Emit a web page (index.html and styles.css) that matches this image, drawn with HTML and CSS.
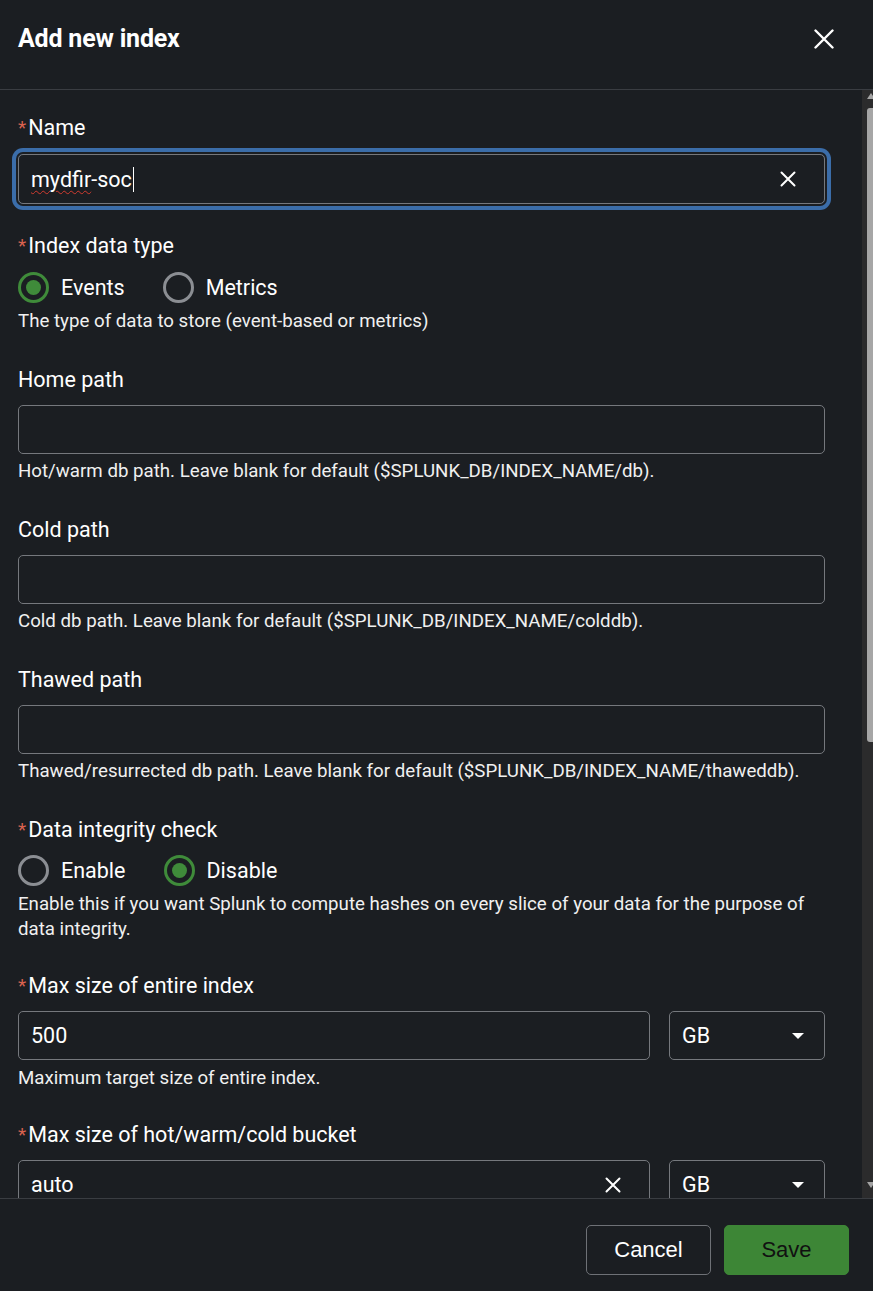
FILE: index.html
```html
<!DOCTYPE html>
<html lang="en">
<head>
<meta charset="utf-8">
<title>Add new index</title>
<link rel="stylesheet" href="styles.css">
</head>
<body>
<div class="modal">
  <header class="modal-header">
    <h1 class="title">Add new index</h1>
    <button class="close" aria-label="Close">
      <svg width="20" height="20" viewBox="0 0 20 20"><path d="M1.5 1.5 L18.5 18.5 M18.5 1.5 L1.5 18.5" stroke="#fff" stroke-width="2.4" stroke-linecap="round"/></svg>
    </button>
  </header>
  <div class="modal-body">
    <div class="scroll">
      <div class="field name-field">
        <label class="label"><span class="req">*</span>Name</label>
        <div class="input focused">
          <span class="value"><span class="spell">mydfir</span>-soc</span><span class="caret"></span>
          <svg class="clear" width="16" height="16" viewBox="0 0 16 16"><path d="M1.5 1.5 L14.5 14.5 M14.5 1.5 L1.5 14.5" stroke="#fff" stroke-width="2" stroke-linecap="round"/></svg>
        </div>
      </div>

      <div class="field radios-field">
        <label class="label"><span class="req">*</span>Index data type</label>
        <div class="radios">
          <span class="radio checked"><span class="dot"></span>Events</span>
          <span class="radio"><span class="dot"></span>Metrics</span>
        </div>
        <p class="help">The type of data to store (event-based or metrics)</p>
      </div>

      <div class="field">
        <label class="label">Home path</label>
        <div class="input"></div>
        <p class="help">Hot/warm db path. Leave blank for default ($SPLUNK_DB/INDEX_NAME/db).</p>
      </div>

      <div class="field">
        <label class="label">Cold path</label>
        <div class="input"></div>
        <p class="help">Cold db path. Leave blank for default ($SPLUNK_DB/INDEX_NAME/colddb).</p>
      </div>

      <div class="field">
        <label class="label">Thawed path</label>
        <div class="input"></div>
        <p class="help">Thawed/resurrected db path. Leave blank for default ($SPLUNK_DB/INDEX_NAME/thaweddb).</p>
      </div>

      <div class="field radios-field integrity-field">
        <label class="label"><span class="req">*</span>Data integrity check</label>
        <div class="radios">
          <span class="radio"><span class="dot"></span>Enable</span>
          <span class="radio checked"><span class="dot"></span>Disable</span>
        </div>
        <p class="help">Enable this if you want Splunk to compute hashes on every slice of your data for the purpose of data integrity.</p>
      </div>

      <div class="field size-field">
        <label class="label"><span class="req">*</span>Max size of entire index</label>
        <div class="row">
          <div class="input grow"><span class="value">500</span></div>
          <div class="input select"><span class="value">GB</span><span class="tri"></span></div>
        </div>
        <p class="help">Maximum target size of entire index.</p>
      </div>

      <div class="field size-field">
        <label class="label"><span class="req">*</span>Max size of hot/warm/cold bucket</label>
        <div class="row">
          <div class="input grow"><span class="value">auto</span>
            <svg class="clear" width="16" height="16" viewBox="0 0 16 16"><path d="M1.5 1.5 L14.5 14.5 M14.5 1.5 L1.5 14.5" stroke="#fff" stroke-width="2" stroke-linecap="round"/></svg>
          </div>
          <div class="input select"><span class="value">GB</span><span class="tri"></span></div>
        </div>
      </div>
    </div>
    <div class="scrollbar">
      <span class="arrow up"></span>
      <div class="thumb"></div>
      <span class="spacer"></span>
      <span class="arrow down"></span>
    </div>
  </div>
  <footer class="modal-footer">
    <button class="btn cancel">Cancel</button>
    <button class="btn save">Save</button>
  </footer>
</div>
</body>
</html>
```

FILE: styles.css
```css
* { box-sizing: border-box; }
html, body {
  margin: 0;
  padding: 0;
  background: #1b1e22;
  color: #f4f4f4;
  font-family: Roboto, "Noto Sans", Arial, sans-serif;
}
.modal {
  width: 873px;
  height: 1291px;
  display: flex;
  flex-direction: column;
  background: #1b1e22;
  overflow: hidden;
}
.modal-header {
  height: 90px;
  flex: none;
  display: flex;
  align-items: center;
  justify-content: space-between;
  padding: 0 39px 12px 18px;
  border-bottom: 1px solid #3a3d42;
}
.title {
  margin: 0;
  font-size: 25px;
  line-height: 30px;
  font-weight: 700;
  color: #fff;
  letter-spacing: -0.2px;
}
.close {
  background: none;
  border: 0;
  padding: 0;
  width: 20px;
  height: 20px;
  display: flex;
  cursor: pointer;
}
.modal-body {
  flex: 1;
  min-height: 0;
  display: flex;
  overflow: hidden;
  border-bottom: 1px solid #3a3d42;
}
.scroll {
  flex: 1;
  padding: 26px 37px 0 18px;
  overflow: hidden;
}
.field {
  margin-bottom: 34px;
}
.name-field { margin-bottom: 30px; }
.label {
  display: block;
  font-size: 21.5px;
  line-height: 24px;
  color: #fff;
}
.req {
  color: #d9624f;
  font-size: 19px;
  margin-right: 2px;
  position: relative;
  top: -1px;
}
.input {
  margin-top: 13px;
  height: 49px;
  border: 1px solid #75787d;
  border-radius: 5px;
  display: flex;
  align-items: center;
  padding: 0 12px;
  font-size: 21.5px;
  color: #fff;
}
.input.focused {
  margin-top: 13px;
  height: 50px;
  box-shadow: 0 0 0 2px #1b1e22, 0 0 0 6px #3b6da9;
  padding-right: 28px;
}
.value { white-space: nowrap; }
.spell {
  text-decoration: underline wavy #d13b2f;
  text-decoration-thickness: 1px;
  text-underline-offset: 3px;
}
.caret {
  display: inline-block;
  width: 1px;
  height: 25px;
  background: #fff;
  margin-left: 1px;
}
.clear {
  margin-left: auto;
  flex: none;
}
.row {
  display: flex;
  gap: 19px;
}
.row .input { margin-top: 12px; }
.size-field .help { margin-top: 6px; }
.size-field { margin-bottom: 32px; }
.grow { flex: 1; padding-right: 28px; }
.select {
  width: 156px;
  flex: none;
  padding-right: 20px;
}
.tri {
  margin-left: auto;
  width: 0;
  height: 0;
  border-left: 6px solid transparent;
  border-right: 6px solid transparent;
  border-top: 6px solid #fff;
}
.radios-field { margin-bottom: 34px; }
.integrity-field { margin-bottom: 32px; }
.radios-field .radios {
  display: flex;
  gap: 38px;
  margin-top: 13px;
  height: 30px;
  align-items: center;
}
.integrity-field .radios { margin-top: 12px; }
.integrity-field .help { margin-top: 8px; }
.radio {
  display: flex;
  align-items: center;
  gap: 12px;
  font-size: 21.5px;
  color: #fff;
}
.dot {
  width: 31px;
  height: 31px;
  border-radius: 50%;
  border: 3px solid #8b8e93;
  display: inline-flex;
  align-items: center;
  justify-content: center;
}
.radio.checked .dot {
  border-color: #3f8b3a;
}
.radio.checked .dot::after {
  content: "";
  width: 15px;
  height: 15px;
  border-radius: 50%;
  background: #3f8b3a;
}
.help {
  margin: 5px 0 0;
  font-size: 18.7px;
  line-height: 25px;
  color: #f0f0f0;
}
.radios-field .help { margin-top: 7px; }
.scrollbar {
  width: 11px;
  flex: none;
  background: #2b2b2c;
  display: flex;
  flex-direction: column;
  align-items: flex-end;
  padding-top: 3px;
}
.arrow {
  width: 0;
  height: 0;
  border-left: 4px solid transparent;
  border-right: 4px solid transparent;
  align-self: flex-end;
}
.arrow.up { border-bottom: 6px solid #a3a3a3; margin-right: -2px; }
.arrow.down { border-top: 6px solid #a3a3a3; margin-right: -2px; margin-bottom: 10px; }
.thumb {
  margin-top: 9px;
  width: 6px;
  height: 634px;
  background: #a6a6a6;
  border-radius: 3px 0 0 3px;
}
.spacer { flex: 1; }
.modal-footer {
  height: 92px;
  flex: none;
  display: flex;
  justify-content: flex-end;
  align-items: flex-start;
  gap: 13px;
  padding: 26px 24px 0 0;
  background: #1b1e22;
}
.btn {
  height: 50px;
  border-radius: 5px;
  font-family: "Liberation Sans", Arial, sans-serif;
  font-size: 22px;
  cursor: pointer;
}
.cancel {
  width: 125px;
  background: transparent;
  color: #fff;
  border: 1px solid #6e7176;
}
.save {
  width: 125px;
  background: #3d8636;
  border: 1px solid #3d8636;
  color: #111;
}
```
